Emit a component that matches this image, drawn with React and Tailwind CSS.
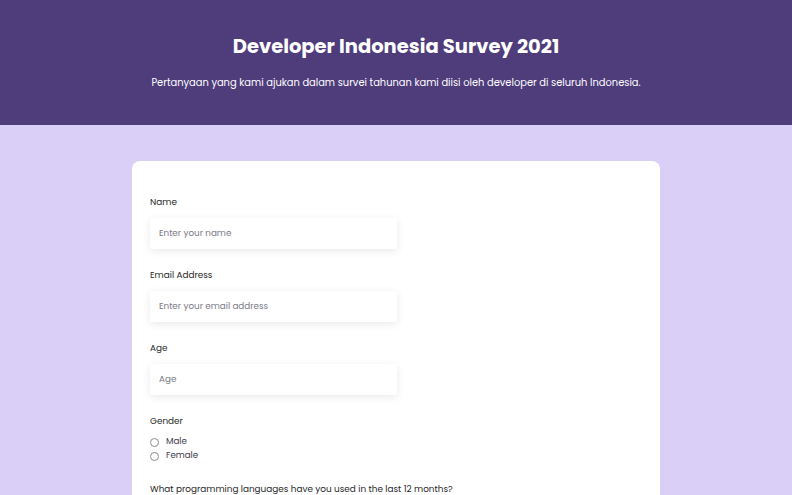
import React from 'react';

const font = { fontFamily: 'Poppins, Inter, "Open Sans", sans-serif' };

const TextField = ({ label, placeholder, type = 'text' }) => (
    <div className="mb-[18px]">
        <label className="block text-[8.9px] leading-[16px] text-[#1f1f1f] mb-[8px]">{label}</label>
        <input
            type={type}
            placeholder={placeholder}
            className="block w-[247px] h-[31px] px-[9px] text-[8.8px] bg-white rounded-[2px] shadow-[0_2px_8px_rgba(0,0,0,0.09)] outline-none placeholder:text-[#7a7a88]"
        />
    </div>
);

const App = () => {
    return (
        <div className="min-h-screen bg-[#dacff7] overflow-hidden" style={font}>
            <header className="bg-[#4f3d7b] h-[125px] flex flex-col items-center pt-[34px]">
                <h1 className="text-[19.5px] leading-[25px] font-bold text-white">Developer Indonesia Survey 2021</h1>
                <p className="mt-[17px] text-[9.9px] leading-[14px] text-white">
                    Pertanyaan yang kami ajukan dalam survei tahunan kami diisi oleh developer di seluruh Indonesia.
                </p>
            </header>

            <div className="flex justify-center pt-[36px]">
                <form className="w-[528px] bg-white rounded-[8px] px-[18px] pt-[33px] pb-10">
                    <TextField label="Name" placeholder="Enter your name" />
                    <TextField label="Email Address" placeholder="Enter your email address" type="email" />
                    <TextField label="Age" placeholder="Age" type="number" />

                    <div className="mb-[18px]">
                        <label className="block text-[8.9px] leading-[16px] text-[#1f1f1f] mb-[6px]">Gender</label>
                        {['Male', 'Female'].map(g => (
                            <label key={g} className="flex items-center h-[14px] text-[8.7px] text-[#3b3b4a]">
                                <span className="w-[9px] h-[9px] rounded-full border border-[#8a8a8a] mr-[7px] bg-white"></span>
                                {g}
                            </label>
                        ))}
                    </div>

                    <label className="block text-[8.9px] leading-[16px] text-[#1f1f1f]">
                        What programming languages have you used in the last 12 months?
                    </label>
                </form>
            </div>
        </div>
    );
};

export default App;
